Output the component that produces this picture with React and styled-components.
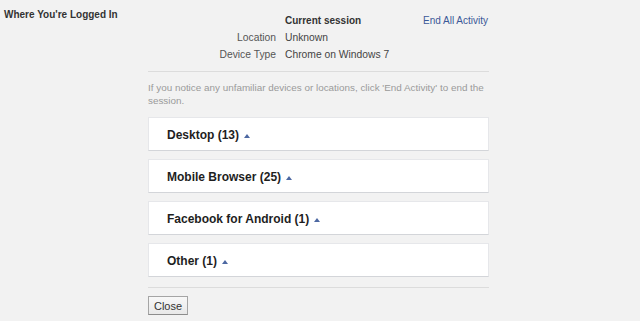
import React from 'react'
import styled, { createGlobalStyle } from 'styled-components'

const GlobalStyle = createGlobalStyle`
  html, body {
    margin: 0;
    padding: 0;
    background: #f2f2f2;
  }

  body {
    font-family: 'Liberation Sans', Arial, sans-serif;
    color: #333;
  }
`

const Page = styled.div`
  display: flex;
  align-items: flex-start;
  padding-top: 9px;
  width: 640px;
  height: 321px;
  box-sizing: border-box;
  overflow: hidden;
`

const SideTitle = styled.div`
  width: 144px;
  padding-left: 4px;
  font-size: 10px;
  line-height: 12px;
  font-weight: bold;
  color: #333;
`

const Content = styled.div`
  display: flex;
  flex-direction: column;
  width: 341px;
  padding-top: 3px;
`

const SessionTable = styled.div`
  display: grid;
  grid-template-columns: 128px 1fr auto;
  column-gap: 9px;
  font-size: 10.3px;
  line-height: 17px;
  padding-right: 1px;
`

const Label = styled.div`
  text-align: right;
  color: #555;
`

const Value = styled.div`
  color: ${p => (p.strong ? '#333' : '#444')};
  font-weight: ${p => (p.strong ? 'bold' : 'normal')};
  font-size: ${p => (p.strong ? '10px' : 'inherit')};
`

const ActionLink = styled.a`
  color: #3b5998;
  font-size: 10px;
  text-decoration: none;
  cursor: pointer;
`

const Divider = styled.hr`
  border: 0;
  border-top: 1px solid #dcdcdc;
  margin: ${p => p.margin};
  width: 100%;
`

const Hint = styled.p`
  margin: 0 0 10px;
  font-size: 9.9px;
  line-height: 13px;
  color: #9a9a9a;
`

const GroupList = styled.div`
  display: flex;
  flex-direction: column;
  gap: 8px;
`

const GroupCard = styled.div`
  display: flex;
  align-items: center;
  height: 34px;
  box-sizing: border-box;
  padding-left: 18px;
  padding-top: 1px;
  background: #fff;
  border: 1px solid #e6e7ea;
  border-bottom-color: #d3d5d9;
  font-size: 12px;
  font-weight: bold;
  color: #1e1e1e;
  cursor: pointer;
`

const Caret = styled.span`
  display: inline-block;
  margin-left: 5px;
  margin-top: 2px;
  width: 0;
  height: 0;
  border-left: 3.5px solid transparent;
  border-right: 3.5px solid transparent;
  border-bottom: 4px solid #4d68a2;
`

const CloseButton = styled.button`
  align-self: flex-start;
  width: 40px;
  height: 19px;
  padding: 0;
  font-family: 'Liberation Sans', Arial, sans-serif;
  font-size: 11px;
  color: #333;
  background: linear-gradient(#f8f8f8, #e8e8e8);
  border: 1px solid #a5a5a5;
  border-bottom-color: #8c8c8c;
  cursor: pointer;
`

const groups = [
  { name: 'Desktop', count: 13 },
  { name: 'Mobile Browser', count: 25 },
  { name: 'Facebook for Android', count: 1 },
  { name: 'Other', count: 1 },
]

const App = () => (
  <>
    <GlobalStyle />
    <Page>
      <SideTitle>Where You're Logged In</SideTitle>
      <Content>
        <SessionTable>
          <Label />
          <Value strong>Current session</Value>
          <ActionLink>End All Activity</ActionLink>
          <Label>Location</Label>
          <Value>Unknown</Value>
          <span />
          <Label>Device Type</Label>
          <Value>Chrome on Windows 7</Value>
          <span />
        </SessionTable>
        <Divider margin="8px 0 9px" />
        <Hint>
          If you notice any unfamiliar devices or locations, click 'End Activity' to end
          the session.
        </Hint>
        <GroupList>
          {groups.map(group => (
            <GroupCard key={group.name}>
              {group.name} ({group.count})
              <Caret />
            </GroupCard>
          ))}
        </GroupList>
        <Divider margin="10px 0 8px" />
        <CloseButton>Close</CloseButton>
      </Content>
    </Page>
  </>
)

export default App
